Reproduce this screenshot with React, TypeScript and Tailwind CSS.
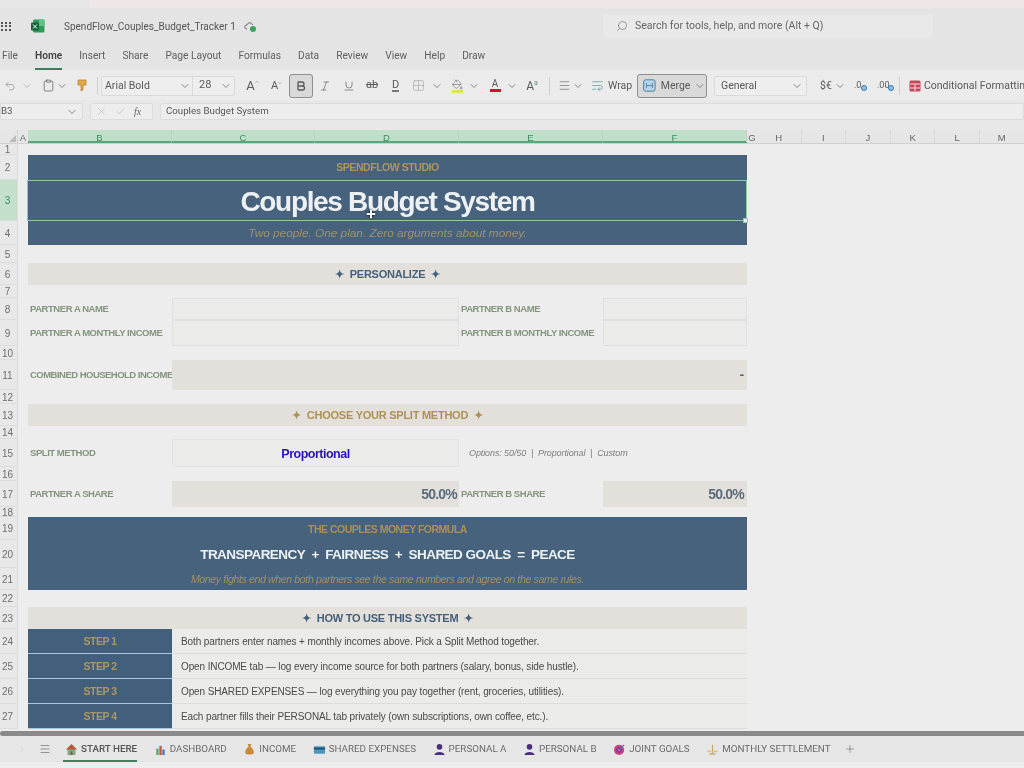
import type { ReactNode } from "react";
import {
  Bold,
  Check,
  ChevronDown,
  ChevronRight,
  ChevronUp,
  Clipboard,
  Grid2x2,
  Italic,
  Menu,
  PaintBucket,
  Plus,
  Search,
  Underline,
  Undo2,
  WrapText,
  X,
} from "lucide-react";

const MENU_ITEMS = [
  "File",
  "Home",
  "Insert",
  "Share",
  "Page Layout",
  "Formulas",
  "Data",
  "Review",
  "View",
  "Help",
  "Draw",
];

const GRID_COLS = "grid grid-cols-[10px_144px_143px_144px_144px_144px] grid-rows-1";

const STEPS = [
  "Both partners enter names + monthly incomes above. Pick a Split Method together.",
  "Open INCOME tab — log every income source for both partners (salary, bonus, side hustle).",
  "Open SHARED EXPENSES — log everything you pay together (rent, groceries, utilities).",
  "Each partner fills their PERSONAL tab privately (own subscriptions, own coffee, etc.).",
];

function Chevron({ className = "" }: { className?: string }) {
  return <ChevronDown size={12} strokeWidth={1.6} className={`text-[#6b6b6b] ${className}`} />;
}

function Row({
  n,
  height,
  active,
  children,
}: {
  n: number;
  height: string;
  active?: boolean;
  children?: ReactNode;
}) {
  return (
    <div className={`flex ${height}`}>
      <div
        className={`flex w-[18px] shrink-0 items-center justify-center border-r border-b border-[#dcdcdc] pt-[1px] pr-[2px] text-[10px] ${
          active ? "bg-[#c4e0cc] text-[#3f8a5f]" : "bg-[#e8e8e8] text-[#6e6e6e]"
        }`}
      >
        {n}
      </div>
      <div className={`${GRID_COLS} w-[729px]`}>{children}</div>
    </div>
  );
}

function Section({ color, children }: { color: string; children: ReactNode }) {
  return (
    <div className={`col-start-2 col-span-5 flex items-center justify-center gap-[6px] bg-[#e3e0db] text-[11px] tracking-[-0.25px] font-bold ${color}`}>
      <span className="text-[11px] leading-none">✦</span>
      <span>{children}</span>
      <span className="text-[11px] leading-none">✦</span>
    </div>
  );
}

function Label({ className = "", children }: { className?: string; children: ReactNode }) {
  return (
    <div className={`flex items-center overflow-hidden whitespace-nowrap pt-[1px] pl-[2px] text-[9.5px] tracking-[-0.45px] font-bold text-[#84947f] ${className}`}>
      {children}
    </div>
  );
}

function Step({ n, text }: { n: number; text: string }) {
  return (
    <Row n={23 + n} height="h-[25px]">
      <div className="col-start-2 flex items-center justify-center border-b border-[#a9c6dc] bg-[#42607c] pt-[1px] text-[10.5px] tracking-[-0.5px] font-bold text-[#ad9760]">
        STEP {n}
      </div>
      <div className="col-span-4 flex items-center border-b border-[#dcdcdb] bg-[#ebebea] pt-[1px] pl-[9px] text-[10px] tracking-[-0.12px] text-[#4a4a4a]">
        {text}
      </div>
    </Row>
  );
}

function TabIcon({ kind }: { kind: string }) {
  if (kind === "home")
    return (
      <svg width="13" height="13" viewBox="0 0 14 14">
        <path d="M7 1 L13 7 H11 V13 H3 V7 H1 Z" fill="#b9583a" />
        <rect x="3" y="7" width="8" height="6" fill="#7fa88c" />
        <rect x="6" y="9" width="2" height="4" fill="#8a5a3a" />
      </svg>
    );
  if (kind === "chart")
    return (
      <svg width="13" height="13" viewBox="0 0 14 14">
        <rect x="1" y="1" width="12" height="12" fill="#dfe6ee" />
        <rect x="2.5" y="6" width="2.5" height="7" fill="#5aa469" />
        <rect x="5.8" y="3" width="2.5" height="10" fill="#c8553d" />
        <rect x="9" y="7" width="2.5" height="6" fill="#3f78b5" />
      </svg>
    );
  if (kind === "bag")
    return (
      <svg width="13" height="13" viewBox="0 0 14 14">
        <path d="M5 1 H9 L8 4 C11 6 12 9 11.5 11 C11 13 3 13 2.5 11 C2 9 3 6 6 4 Z" fill="#c98a3c" />
      </svg>
    );
  if (kind === "card")
    return (
      <svg width="13" height="13" viewBox="0 0 14 14">
        <rect x="1" y="3.5" width="12" height="8" rx="1" fill="#4f97b8" />
        <rect x="1" y="5" width="12" height="2" fill="#1f4f78" />
      </svg>
    );
  if (kind === "user")
    return (
      <svg width="13" height="13" viewBox="0 0 14 14">
        <circle cx="7" cy="4.2" r="3" fill="#4a2f7f" />
        <path d="M1.5 13 C2 8.5 12 8.5 12.5 13 Z" fill="#4a2f7f" />
      </svg>
    );
  if (kind === "target")
    return (
      <svg width="13" height="13" viewBox="0 0 14 14">
        <circle cx="6.5" cy="7.5" r="5.5" fill="#d23f7e" />
        <circle cx="6.5" cy="7.5" r="3.2" fill="#7a3f9a" />
        <circle cx="6.5" cy="7.5" r="1.4" fill="#e0559a" />
        <path d="M7 7 L12 2" stroke="#3f78b5" strokeWidth="1.4" />
      </svg>
    );
  return (
    <svg width="13" height="13" viewBox="0 0 14 14">
      <path d="M7 2 V11" stroke="#c9a56a" strokeWidth="1.2" />
      <path d="M1 8 H6 C6 10.5 1 10.5 1 8 Z M8 8 H13 C13 10.5 8 10.5 8 8 Z" fill="#e2bf85" />
      <rect x="4" y="11" width="6" height="1.6" fill="#c9a56a" />
    </svg>
  );
}

function SheetTab({
  icon,
  label,
  active,
}: {
  icon: string;
  label: string;
  active?: boolean;
}) {
  return (
    <div
      className={`flex h-full items-center gap-[3px] whitespace-nowrap border-y-2 border-t-transparent ${
        active ? "border-b-[#3d7f5c] pl-[2px] font-medium text-[#555]" : "border-b-transparent text-[#6b6b6b]"
      }`}
    >
      <TabIcon kind={icon} />
      <span>{label}</span>
    </div>
  );
}

export default function App() {
  return (
    <div className="flex h-[768px] w-[1024px] flex-col overflow-hidden bg-[#ededed] font-['Liberation_Sans',sans-serif] blur-[0.5px]">
      <div className="flex h-[8px] shrink-0 bg-[#efe6e6]">
        <div className="w-[90px] bg-[#e6e6e6]" />
      </div>

      {/* title bar */}
      <div className="flex h-[34px] shrink-0 items-center bg-[#e4e4e4] pt-[2px] font-['Roboto',sans-serif] text-[#555]">
        <div className="flex w-[603px] items-center">
          <div className="ml-[1px] grid w-[10px] grid-cols-3 gap-[1.5px]">
            {[0, 1, 2, 3, 4, 5, 6, 7, 8].map((i) => (
              <span key={i} className="h-[2px] w-[2px] bg-[#555]" />
            ))}
          </div>
          <svg className="ml-[20px]" width="14" height="14" viewBox="0 0 14 14">
            <rect x="2" y="0.5" width="11.5" height="13" rx="1.5" fill="#2f9a5c" />
            <rect x="8" y="0.5" width="5.5" height="6.5" fill="#5cc384" />
            <rect x="0" y="3.5" width="8" height="8" rx="1" fill="#12663a" />
            <path d="M2 5.5 L6 9.5 M6 5.5 L2 9.5" stroke="#fff" strokeWidth="1" />
          </svg>
          <span className="ml-[19px] text-[10px]">SpendFlow_Couples_Budget_Tracker 1</span>
          <svg className="ml-[8px]" width="13" height="13" viewBox="0 0 13 13">
            <path d="M3 9 C0 9 0 5 3 5 C3.5 2 8 2 8.5 5" fill="none" stroke="#666" strokeWidth="1" />
            <circle cx="9" cy="9" r="3" fill="#3fa35f" />
          </svg>
        </div>
        <div className="flex h-[23px] w-[330px] items-center rounded-[2px] bg-[#e9e9e9] pl-[13px] text-[10.5px] text-[#666]">
          <Search size={12} strokeWidth={1.2} className="-scale-x-100" />
          <span className="ml-[7px]">Search for tools, help, and more (Alt + Q)</span>
        </div>
      </div>

      {/* menu */}
      <div className="flex h-[28px] shrink-0 items-center gap-[17px] bg-[#e4e4e4] pl-[2px] font-['Roboto',sans-serif] text-[10.2px] text-[#5f5f5f]">
        {MENU_ITEMS.map((item) => (
          <div
            key={item}
            className={`flex h-full items-center border-b-2 pt-[2px] ${
              item === "Home" ? "border-[#3d7f5c] font-semibold text-[#444]" : "border-transparent"
            }`}
          >
            {item}
          </div>
        ))}
      </div>

      {/* toolbar */}
      <div className="flex h-[30px] shrink-0 items-center overflow-hidden whitespace-nowrap bg-[#ebebeb] pt-[1px] font-['Roboto',sans-serif] text-[10.5px] text-[#5a5a5a] [&>*]:shrink-0">
        <div className="flex w-[20px] justify-center"><Undo2 size={12} className="text-[#aaa]" /></div>
        <div className="flex w-[14px] justify-center"><Chevron className="text-[#aaa]" /></div>
        <div className="ml-[7px] flex w-[14px] justify-center"><Clipboard size={13} strokeWidth={1.3} /></div>
        <div className="flex w-[14px] justify-center"><Chevron /></div>
        <div className="ml-[7px] flex w-[12px] justify-center">
          <svg width="10" height="13" viewBox="0 0 10 13">
            <path d="M1 1 H9 V6 H6 V11 L4 12 V6 H1 Z" fill="#e0a94a" stroke="#b8792a" strokeWidth="0.7" />
          </svg>
        </div>
        <div className="ml-[9px] h-[18px] w-px bg-[#cfcfcf]" />
        <div className="ml-[3px] flex h-[20px] w-[134px] items-center rounded-[2px] border border-[#dadada] bg-[#eeeeee]">
          <span className="w-[77px] pl-[3px]">Arial Bold</span>
          <Chevron />
          <span className="ml-[1px] h-full w-px bg-[#dadada]" />
          <span className="ml-[6px] w-[21px] text-[11px]">28</span>
          <Chevron />
        </div>
        <div className="ml-[7px] flex w-[22px] items-start justify-center text-[13px] leading-none">
          A<ChevronUp size={6} className="-ml-[1px] text-[#888]" />
        </div>
        <div className="ml-[2px] flex w-[22px] items-start justify-center text-[11px] leading-none">
          A<ChevronDown size={6} className="-ml-[1px] text-[#4f9a7f]" />
        </div>
        <div className="ml-[1px] flex h-[24px] w-[24px] items-center justify-center rounded-[3px] border border-[#8f8f8f] bg-[#d9d9d9]"><Bold size={12} strokeWidth={2.6} /></div>
        <div className="flex w-[24px] justify-center"><Italic size={12} strokeWidth={1.3} /></div>
        <div className="flex w-[23px] justify-center"><Underline size={12} strokeWidth={1.3} /></div>
        <div className="flex w-[24px] justify-center text-[11px] line-through">ab</div>
        <div className="flex w-[23px] justify-center"><span className="border-b-2 border-[#777] text-[11px] leading-[11px]">D</span></div>
        <div className="flex w-[23px] justify-center"><Grid2x2 size={13} strokeWidth={1} className="text-[#999]" /></div>
        <div className="flex w-[14px] justify-center"><Chevron /></div>
        <div className="ml-[3px] flex w-[20px] flex-col items-center">
          <PaintBucket size={11} strokeWidth={1.2} />
          <span className="h-[3px] w-[11px] bg-[#dfe84a]" />
        </div>
        <div className="flex w-[14px] justify-center"><Chevron /></div>
        <div className="ml-[4px] flex w-[20px] flex-col items-center text-[10px] leading-[10px]">A<span className="h-[3px] w-[11px] bg-[#d0142c]" /></div>
        <div className="flex w-[14px] justify-center"><Chevron /></div>
        <div className="ml-[1px] flex w-[24px] items-start justify-center text-[12px] leading-none">A<span className="text-[7px] leading-none text-[#4f9a7f]">a</span></div>
        <div className="ml-[5px] h-[18px] w-px bg-[#cfcfcf]" />
        <div className="ml-[7px] flex w-[14px] justify-center"><Menu size={13} strokeWidth={1.1} /></div>
        <div className="flex w-[14px] justify-center"><Chevron /></div>
        <WrapText size={13} strokeWidth={1.2} className="ml-[6px] text-[#4f8f9a]" />
        <span className="ml-[4px] w-[24px]">Wrap</span>
        <div className="ml-[5px] flex h-[24px] w-[70px] items-center rounded-[3px] border border-[#8f8f8f] bg-[#d9d9d9] pl-[5px]">
          <svg width="13" height="13" viewBox="0 0 13 13">
            <rect x="0.7" y="0.7" width="11.6" height="11.6" rx="2" fill="#b9d4e6" stroke="#4a7fa5" strokeWidth="1" />
            <path d="M3.5 6.5 H9.5 M3.5 4 V9 M9.5 4 V9" stroke="#4a7fa5" strokeWidth="0.9" fill="none" />
          </svg>
          <span className="ml-[5px] w-[31px]">Merge</span>
          <Chevron className="ml-[3px]" />
        </div>
        <div className="ml-[7px] flex h-[20px] w-[93px] items-center justify-between rounded-[2px] border border-[#dadada] bg-[#eeeeee] pr-[3px] pl-[6px]">
          General
          <Chevron />
        </div>
        <span className="ml-[13px] w-[12px]">$€</span>
        <Chevron className="ml-[2px]" />
        <div className="ml-[8px] flex w-[22px] items-center text-[9px]">
          .0<span className="mt-[5px] h-[6px] w-[6px] rounded-full border border-[#2f7fb5] bg-[#8fc1e0]" />
        </div>
        <div className="ml-[1px] flex w-[20px] items-center text-[9px]">
          .00<span className="mt-[5px] -ml-[2px] h-[6px] w-[6px] rounded-full border border-[#2f7fb5] bg-[#8fc1e0]" />
        </div>
        <div className="ml-[2px] h-[18px] w-px bg-[#cfcfcf]" />
        <svg className="ml-[9px]" width="12" height="12" viewBox="0 0 12 12">
          <rect x="0.5" y="0.5" width="11" height="11" rx="1.5" fill="#c4475a" />
          <path d="M1 4 H11 M1 8 H11 M6 4 V11" stroke="#f3dfe2" strokeWidth="1" />
        </svg>
        <span className="ml-[3px]">Conditional Formatting</span>
      </div>

      {/* formula bar */}
      <div className="flex h-[30px] shrink-0 bg-[#e8e8e8] pt-[3px] pb-[10px] font-['Roboto',sans-serif] text-[9.7px] text-[#555]">
        <div className="flex w-[83px] items-center justify-between rounded-r-[2px] border border-[#dcdcdc] bg-[#ededed] pr-[4px]">
          <span>B3</span>
          <Chevron />
        </div>
        <div className="ml-[7px] flex w-[63px] items-center gap-[8px] rounded-[2px] border border-[#dcdcdc] bg-[#ededed] pl-[5px] text-[#aaa]">
          <X size={11} strokeWidth={1.2} />
          <Check size={11} strokeWidth={1.2} />
          <span className="font-['Liberation_Serif',serif] text-[10px] text-[#666] italic">fx</span>
        </div>
        <div className="ml-[7px] flex flex-1 items-center rounded-l-[2px] border border-[#dcdcdc] bg-[#ededed] pb-[1px] pl-[5px]">
          Couples Budget System
        </div>
      </div>

      {/* sheet */}
      <div className="relative min-h-0 flex-1 overflow-hidden">
        <div className="flex h-[14px] items-center border-b border-[#d0d0d0] bg-[#e6e6e6] text-center text-[9.5px] leading-[13px] [&>*]:shrink-0 [&>*]:pt-[1px]">
          <div className="relative h-full w-[18px] border-r border-[#cfcfcf]">
            <span className="absolute right-[1px] bottom-[1px] h-0 w-0 border-b-[7px] border-l-[7px] border-b-[#bbb] border-l-transparent" />
          </div>
          <div className="w-[10px] text-[#666]">A</div>
          {["B", "C", "D", "E", "F"].map((c) => (
            <div
              key={c}
              className={`h-full border-r border-[#b4d6bd] border-b-2 border-b-[#57a878] bg-[#c0dfc8] text-[#3f8a5f] ${
                c === "C" ? "w-[143px]" : "w-[144px]"
              }`}
            >
              {c}
            </div>
          ))}
          <div className="w-[10px] text-[#666]">G</div>
          {["H", "I", "J", "K", "L", "M"].map((c) => (
            <div key={c} className="h-full w-[44.6px] border-r border-[#d8d8d8] text-[#666]">
              {c}
            </div>
          ))}
        </div>

        <Row n={1} height="h-[11px]" />
        <Row n={2} height="h-[25px]">
          <div className="col-start-2 col-span-5 flex items-center justify-center bg-[#46627c] pt-[1px] text-[10.5px] tracking-[-0.45px] font-bold text-[#ad9760]">
            SPENDFLOW STUDIO
          </div>
        </Row>
        <Row n={3} height="h-[41px]" active>
          <div className="relative col-start-2 col-span-5 flex items-center justify-center bg-[#46627c] pt-[2px] text-[28px] tracking-[-1.33px] leading-none font-bold text-[#eef1f4]">
            Couples Budget System
            <div className="absolute inset-0 -left-[1px] border border-[#8fc9a5]" />
            <div className="absolute -right-[1px] -bottom-[2px] h-[5px] w-[5px] border border-[#8fc9a5] bg-[#eeeeee]" />
            <Plus size={12} strokeWidth={4} className="absolute top-[28px] left-[337px] text-white [filter:drop-shadow(0_0_1px_#000)]" />
          </div>
        </Row>
        <Row n={4} height="h-[24px]">
          <div className="col-start-2 col-span-5 flex items-center justify-center bg-[#46627c] pt-[2px] text-[11.8px] text-[#a0926a] italic">
            Two people. One plan. Zero arguments about money.
          </div>
        </Row>
        <Row n={5} height="h-[18px]" />
        <Row n={6} height="h-[22px]">
          <Section color="text-[#44607a]">PERSONALIZE</Section>
        </Row>
        <Row n={7} height="h-[13px]" />
        <Row n={8} height="h-[22px]">
          <Label className="col-start-2">PARTNER A NAME</Label>
          <div className="col-span-2 border border-[#e0e0e0] bg-[#ebebea]" />
          <Label>PARTNER B NAME</Label>
          <div className="border border-[#e0e0e0] bg-[#ebebea]" />
        </Row>
        <Row n={9} height="h-[26px]">
          <Label className="col-start-2">PARTNER A MONTHLY INCOME</Label>
          <div className="col-span-2 border border-[#e0e0e0] bg-[#ebebea]" />
          <Label>PARTNER B MONTHLY INCOME</Label>
          <div className="border border-[#e0e0e0] bg-[#ebebea]" />
        </Row>
        <Row n={10} height="h-[14px]" />
        <Row n={11} height="h-[30px]">
          <Label className="col-start-2 !tracking-[-0.52px]">COMBINED HOUSEHOLD INCOME</Label>
          <div className="col-span-4 flex items-center justify-end bg-[#e3e0db] pr-[3px] text-[13px] font-bold text-[#4a5a68]">
            -
          </div>
        </Row>
        <Row n={12} height="h-[14px]" />
        <Row n={13} height="h-[22px]">
          <Section color="text-[#ad9153]">CHOOSE YOUR SPLIT METHOD</Section>
        </Row>
        <Row n={14} height="h-[13px]" />
        <Row n={15} height="h-[28px]">
          <Label className="col-start-2">SPLIT METHOD</Label>
          <div className="col-span-2 flex items-center justify-center border border-[#e3e3e3] bg-[#ebebea] pt-[2px] text-[12.5px] tracking-[-0.5px] font-bold text-[#2a12c4]">
            Proportional
          </div>
          <div className="col-span-2 flex items-center whitespace-pre pt-[1px] pl-[10px] text-[9px] tracking-[-0.1px] text-[#7d7d7d] italic">
            Options: 50/50  |  Proportional  |  Custom
          </div>
        </Row>
        <Row n={16} height="h-[14px]" />
        <Row n={17} height="h-[26px]">
          <Label className="col-start-2">PARTNER A SHARE</Label>
          <div className="col-span-2 flex items-center justify-end bg-[#e3e0db] pr-[2px] text-[14px] tracking-[-0.8px] font-bold text-[#5c6c7c]">
            50.0%
          </div>
          <Label>PARTNER B SHARE</Label>
          <div className="flex items-center justify-end bg-[#e3e0db] pr-[3px] text-[14px] tracking-[-0.8px] font-bold text-[#5c6c7c]">
            50.0%
          </div>
        </Row>
        <Row n={18} height="h-[10px]" />
        <Row n={19} height="h-[23px]">
          <div className="col-start-2 col-span-5 flex items-center justify-center bg-[#46627c] pt-[2px] text-[10.5px] tracking-[-0.5px] font-bold text-[#ad9153]">
            THE COUPLES MONEY FORMULA
          </div>
        </Row>
        <Row n={20} height="h-[28px]">
          <div className="col-start-2 col-span-5 flex items-center justify-center whitespace-pre bg-[#46627c] pt-[2px] text-[13.5px] tracking-[-0.54px] font-bold text-[#eef1f4]">
            TRANSPARENCY  +  FAIRNESS  +  SHARED GOALS  =  PEACE
          </div>
        </Row>
        <Row n={21} height="h-[22px]">
          <div className="col-start-2 col-span-5 flex items-center justify-center bg-[#46627c] pt-[1px] text-[10.5px] tracking-[-0.34px] text-[#a0926a] italic">
            Money fights end when both partners see the same numbers and agree on the same rules.
          </div>
        </Row>
        <Row n={22} height="h-[17px]" />
        <Row n={23} height="h-[22px]">
          <Section color="text-[#44607a]">HOW TO USE THIS SYSTEM</Section>
        </Row>
        {STEPS.map((text, i) => (
          <Step key={i} n={i + 1} text={text} />
        ))}
      </div>

      {/* scrollbar + tabs */}
      <div className="h-[5px] shrink-0 rounded-l-full bg-[#8a8a8a]" />
      <div className="flex h-[26px] shrink-0 items-center gap-[16.5px] bg-[#e6e6e6] font-['Roboto',sans-serif] text-[9.8px]">
        <div className="ml-[18px] flex w-[8px] justify-center">
          <ChevronRight size={11} className="text-[#c8c8c8]" />
        </div>
        <Menu size={12} strokeWidth={1.3} className="-ml-[3.5px] -mr-[4.5px] text-[#666]" />
        <SheetTab icon="home" label="START HERE" active />
        <SheetTab icon="chart" label="DASHBOARD" />
        <SheetTab icon="bag" label="INCOME" />
        <SheetTab icon="card" label="SHARED EXPENSES" />
        <SheetTab icon="user" label="PERSONAL A" />
        <SheetTab icon="user" label="PERSONAL B" />
        <SheetTab icon="target" label="JOINT GOALS" />
        <SheetTab icon="scales" label="MONTHLY SETTLEMENT" />
        <Plus size={12} strokeWidth={1.2} className="-ml-[3px] text-[#666]" />
      </div>
      <div className="h-[6px] shrink-0 bg-[#ededed]" />
    </div>
  );
}
